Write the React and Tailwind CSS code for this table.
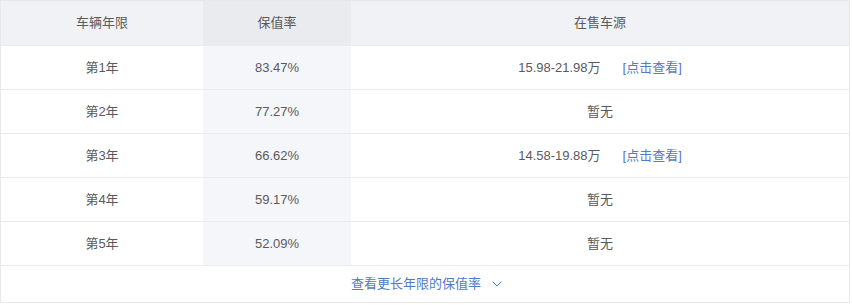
import { ChevronDown } from 'lucide-react';

const rows = [
  { year: '第1年', rate: '83.47%', price: '15.98-21.98万' },
  { year: '第2年', rate: '77.27%', price: null },
  { year: '第3年', rate: '66.62%', price: '14.58-19.88万' },
  { year: '第4年', rate: '59.17%', price: null },
  { year: '第5年', rate: '52.09%', price: null },
];

export default function App() {
  return (
    <div className="w-[852px] h-[305px] bg-white text-[13px] text-[#5a5a5a]" style={{ fontFamily: '"Liberation Sans", "Noto Sans CJK SC", sans-serif' }}>
      <div className="w-[850px] border border-[#e6e8ec]">
        {/* header */}
        <div className="flex h-[44px] bg-[#f1f2f5]">
          <div className="w-[202px] flex items-center justify-center">车辆年限</div>
          <div className="w-[148px] flex items-center justify-center bg-[#e9ebef]">保值率</div>
          <div className="flex-1 flex items-center justify-center">在售车源</div>
        </div>

        {/* body */}
        {rows.map((r) => (
          <div key={r.year} className="flex h-[44px] border-t border-[#ebebeb]">
            <div className="w-[202px] flex items-center justify-center">{r.year}</div>
            <div className="w-[148px] flex items-center justify-center bg-[#f5f6f9]">{r.rate}</div>
            <div className="flex-1 flex items-center justify-center">
              {r.price ? (
                <>
                  <span>{r.price}</span>
                  <span className="ml-[22px] text-[#4f7bc4]">[点击查看]</span>
                </>
              ) : (
                <span>暂无</span>
              )}
            </div>
          </div>
        ))}

        {/* footer */}
        <div className="h-[37px] border-t border-[#ebebeb] flex items-center justify-center text-[#4f7bc4]">
          <span className="ml-[6px]">查看更长年限的保值率</span>
          <ChevronDown size={16} strokeWidth={1.5} className="ml-[8px] text-[#4f7bc4]" />
        </div>
      </div>
    </div>
  );
}
